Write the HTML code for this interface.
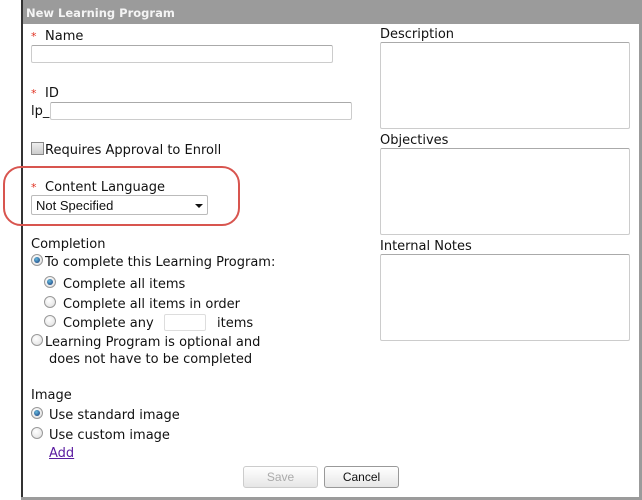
<!DOCTYPE html>
<html><head><meta charset="utf-8"><style>
*{margin:0;padding:0;box-sizing:border-box}
body{width:642px;height:500px;background:#fff;position:relative;overflow:hidden;font-family:"DejaVu Sans","Liberation Sans",sans-serif;font-size:13px;color:#111}
.a{position:absolute;white-space:nowrap}
.t{margin-top:1px}
.frame{position:absolute;left:21px;top:0;width:621px;height:500px;border-left:2px solid #333;border-right:1px solid #333;border-bottom:1px solid #333;}
.rb{position:absolute;left:639px;top:0;width:3px;height:500px;background:#9b9b9b}
.bb{position:absolute;left:21px;top:497px;width:621px;height:3px;background:#9b9b9b}
.title{position:absolute;left:23px;top:0;width:616px;height:24px;background:#9b9b9b;color:#f4f4f4;font-weight:bold;font-size:11.5px;padding:6px 0 0 3px}
.in{position:absolute;border:1px solid #ccc;border-top-color:#aaa;background:#fff;border-radius:2px}
.st{color:#e03020;font-size:11px;display:inline-block;width:14px}
.r{position:absolute;width:12px;height:12px;border-radius:50%;border:1px solid #999;background:radial-gradient(circle at 40% 35%,#fff,#ddd)}
.r.on::after{content:"";position:absolute;left:2px;top:2px;width:6px;height:6px;border-radius:50%;background:radial-gradient(circle at 40% 35%,#6bd,#137)}
.btn{position:absolute;height:22px;border:1px solid #999;border-radius:3px;background:linear-gradient(#fff,#e6e6e6);font-family:"Liberation Sans",sans-serif;font-size:12px;text-align:center;line-height:20px}
</style></head><body>
<div class="frame"></div><div class="rb"></div><div class="bb"></div>
<div class="title">New Learning Program</div>

<div class="a t" style="left:31px;top:28px"><span class="st">*</span>Name</div>
<div class="in" style="left:31px;top:45px;width:302px;height:18px"></div>
<div class="a t" style="left:31px;top:85px"><span class="st">*</span>ID</div>
<div class="a t" style="left:31px;top:103px">lp_</div>
<div class="in" style="left:50px;top:102px;width:302px;height:18px"></div>
<div class="a" style="left:31px;top:142px;width:13px;height:13px;border:1px solid #888;background:linear-gradient(#eee,#ccc)"></div>
<div class="a t" style="left:45px;top:142px">Requires Approval to Enroll</div>
<div class="a" style="left:3px;top:166px;width:237px;height:60px;border:2px solid #d8554f;border-radius:18px"></div>
<div class="a t" style="left:31px;top:179px"><span class="st">*</span>Content Language</div>
<div class="in" style="left:31px;top:195px;width:177px;height:20px;border-color:#bbb"></div>
<div class="a" style="left:36px;top:198px;font-family:'Liberation Sans',sans-serif;font-size:13px">Not Specified</div>
<div class="a" style="left:195px;top:204px;border-left:4px solid transparent;border-right:4px solid transparent;border-top:4px solid #111"></div>

<div class="a t" style="left:31px;top:236px">Completion</div>
<div class="r on" style="left:31px;top:254px"></div><div class="a t" style="left:45px;top:254px">To complete this Learning Program:</div>
<div class="r on" style="left:44px;top:276px"></div><div class="a t" style="left:63px;top:276px">Complete all items</div>
<div class="r" style="left:44px;top:296px"></div><div class="a t" style="left:63px;top:296px">Complete all items in order</div>
<div class="r" style="left:44px;top:315px"></div><div class="a t" style="left:63px;top:315px">Complete any</div>
<div class="in" style="left:164px;top:314px;width:42px;height:17px;border-color:#ddd"></div>
<div class="a t" style="left:217px;top:315px">items</div>
<div class="r" style="left:31px;top:334px"></div><div class="a t" style="left:45px;top:334px">Learning Program is optional and</div>
<div class="a t" style="left:49px;top:351px">does not have to be completed</div>

<div class="a t" style="left:31px;top:387px">Image</div>
<div class="r on" style="left:31px;top:407px"></div><div class="a t" style="left:49px;top:407px">Use standard image</div>
<div class="r" style="left:31px;top:427px"></div><div class="a t" style="left:49px;top:427px">Use custom image</div>
<div class="a t" style="left:49px;top:445px;color:#5a1aa0;text-decoration:underline">Add</div>

<div class="btn" style="left:243px;top:466px;width:75px;color:#aaa;border-color:#ccc">Save</div>
<div class="btn" style="left:324px;top:466px;width:75px">Cancel</div>

<div class="a t" style="left:380px;top:26px">Description</div>
<div class="in" style="left:380px;top:42px;width:250px;height:87px"></div>
<div class="a t" style="left:380px;top:132px">Objectives</div>
<div class="in" style="left:380px;top:148px;width:250px;height:87px"></div>
<div class="a t" style="left:380px;top:238px">Internal Notes</div>
<div class="in" style="left:380px;top:254px;width:250px;height:87px"></div>
</body></html>
